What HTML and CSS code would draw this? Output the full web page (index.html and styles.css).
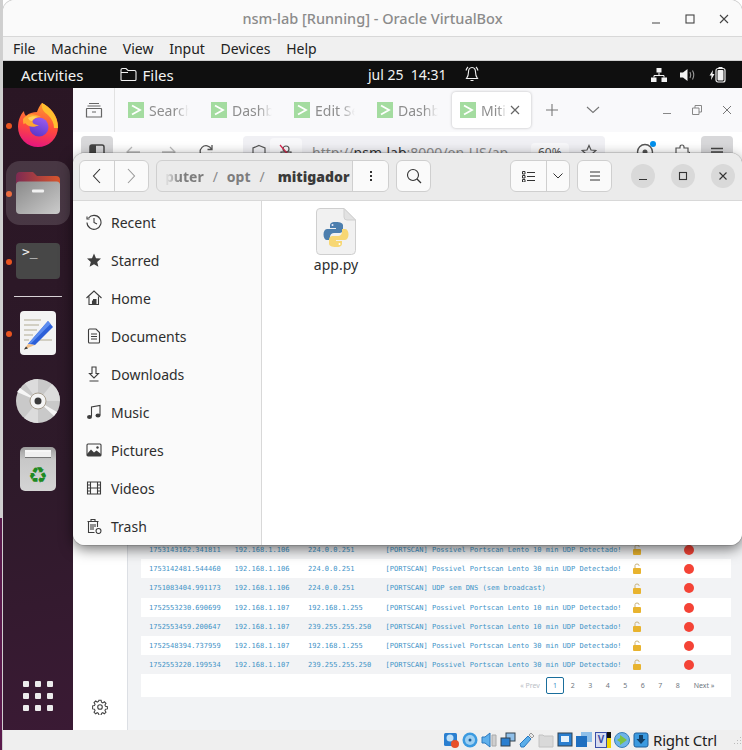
FILE: index.html
```html
<!DOCTYPE html>
<html>
<head>
	<title>nsm-lab [Running] - Oracle VirtualBox</title>
	<meta charset="utf-8" />
	<link rel="stylesheet" href="styles.css">
</head>
<body>
<div class="edge"></div>
<div class="vbox">
	<div class="titlebar">
		<span class="title">nsm-lab [Running] - Oracle VirtualBox</span>
		<div class="wm-btns">
			<svg width="12" height="12" viewBox="0 0 12 12"><path d="M2 10h8" class="ln"/></svg>
			<svg width="12" height="12" viewBox="0 0 12 12"><rect x="2" y="2" width="8" height="8" class="ln"/></svg>
			<svg width="12" height="12" viewBox="0 0 12 12"><path d="M2 2l8 8M10 2l-8 8" class="ln"/></svg>
		</div>
	</div>
	<div class="menubar">
		<span>File</span><span>Machine</span><span>View</span><span>Input</span><span>Devices</span><span>Help</span>
	</div>

	<div class="guest">
		<div class="topbar">
			<span class="activities">Activities</span>
			<span class="app-name">
				<svg width="17" height="15" viewBox="0 0 17 15"><path d="M1 13V3q0-1.500 1.500-1.500h3.500l2 2h6.500q1.500 0 1.500 1.500v7.500q0 1-1 1H2q-1 0-1-1zM1 5.500h7" fill="none" stroke="#f2f2f2" stroke-width="1.100"/></svg>
				Files
			</span>
			<span class="clock">jul 25&nbsp;&nbsp;14:31</span>
			<svg class="bell" width="14" height="16" viewBox="0 0 14 16"><path d="M7 1.500C4.500 1.500 3.500 3.500 3.500 6c0 3-.8 5-2 6.500h11c-1.200-1.500-2-3.500-2-6.500 0-2.500-1-4.500-3.500-4.500zM5.500 14.500h3M1 4.500Q1.500 2.500 3 1M13 4.500Q12.500 2.500 11 1" fill="none" stroke="#f2f2f2" stroke-width="1.100"/></svg>
			<div class="tray">
				<svg width="16" height="14" viewBox="0 0 16 14"><path d="M5.500 0h5v4.500h-5zM0 9.500h5.500V14H0zM10.500 9.500H16V14h-5.500z" fill="#f2f2f2"/><path d="M8 4.500v3M3 9.500V7.500h10v2" fill="none" stroke="#f2f2f2"/></svg>
				<svg width="16" height="14" viewBox="0 0 16 14"><path d="M0 4.500h3L7.500 1v12L3 9.500H0z" fill="#f2f2f2"/><path d="M10 4q1.500 3 0 6M12.500 2.500q2.500 4.500 0 9" fill="none" stroke="#999" stroke-width="1.100"/></svg>
				<svg width="17" height="16" viewBox="0 0 17 16"><path d="M4 3L.5 8.500h2L2 13l3.500-6h-2z" fill="#f2f2f2"/><rect x="7" y="1.500" width="9" height="13.500" rx="2" fill="none" stroke="#f2f2f2" stroke-width="1.200"/><rect x="9.500" y="0" width="4" height="2" fill="#f2f2f2"/><rect x="8.500" y="3" width="6" height="10.500" rx="1" fill="#f2f2f2"/></svg>
			</div>
		</div>

		<div class="desk">
			<div class="dock">
				<div class="dock-item has-dot">
					<svg width="42" height="44" viewBox="0 0 42 44">
						<defs>
							<linearGradient id="ff" x1="0.6" y1="0" x2="0.4" y2="1"><stop offset="0" stop-color="#ff9a2e"/><stop offset="0.55" stop-color="#ff4a3d"/><stop offset="1" stop-color="#e5147f"/></linearGradient>
							<linearGradient id="ffp" x1="0.7" y1="0" x2="0.3" y2="1"><stop offset="0" stop-color="#9a5cf0"/><stop offset="1" stop-color="#5a36c8"/></linearGradient>
						</defs>
						<path d="M1 24C1 18 3 12 7 8c0 2 1 4 2 5 3-3 7-4 11-4 2-5 3-7 5-9 8 4 16 12 16 24a20 20 0 0 1-40 0z" fill="url(#ff)"/>
						<path d="M25 0c-1 6 2 9 6 12 4 4 6 8 6 13h4C41 13 33 4 25 0z" fill="#ffbf2e"/>
						<circle cx="22" cy="24" r="9.500" fill="url(#ffp)"/>
						<path d="M6 16c4-6 11-6 18-2-4 0-7 1-8 3-2 3 2 5 6 5-5 3-11 2-14-2-1 2-2 2-2-4z" fill="#ffa733"/>
						<path d="M11 15c3-2 7-2 10-1-3 1-5 2-6 4-2 0-3-1-4-3z" fill="#ffd35c"/>
					</svg>
				</div>
				<div class="dock-item has-dot is-active">
					<svg width="44" height="42" viewBox="0 0 44 42">
						<defs>
							<linearGradient id="fold" x1="0" y1="0" x2="1" y2="0"><stop offset="0" stop-color="#7d2a52"/><stop offset="1" stop-color="#d9562c"/></linearGradient>
							<linearGradient id="front" x1="0" y1="0" x2="1" y2="1"><stop offset="0" stop-color="#8a8a8a"/><stop offset="1" stop-color="#cbcbcb"/></linearGradient>
						</defs>
						<path d="M0 5q0-5 4-5h13l4 4h19q4 0 4 4v12H0z" fill="url(#fold)"/>
						<path d="M0 13q0-3.500 3.500-3.500h37q3.500 0 3.500 3.500v25q0 4-4 4H4q-4 0-4-4z" fill="url(#front)"/>
						<rect x="16" y="17.500" width="12" height="3" rx="1" fill="#f2f2f2"/>
					</svg>
				</div>
				<div class="dock-item has-dot">
					<div class="term-icon">&gt;_</div>
				</div>
				<div class="dock-sep"></div>
				<div class="dock-item has-dot">
					<svg width="36" height="44" viewBox="0 0 36 44">
						<rect width="36" height="44" rx="4" fill="#f3f3f3"/>
						<path d="M4 9h17M4 14h15M4 19h13M4 24h9M4 29h5M18 29h14" stroke="#c8c4b4" stroke-width="1.500"/>
						<path d="M28 10l5 6-18 18-7-1z" fill="#2c5fd8"/>
						<path d="M28 10l2.500 3L11 32.500 8 33z" fill="#5c8cf0"/>
						<path d="M8 33l7 1-11 4.500z" fill="#f2c08a"/>
						<path d="M4 38.500l2-3 2 2z" fill="#333"/>
					</svg>
				</div>
				<div class="dock-item">
					<svg width="44" height="44" viewBox="0 0 44 44">
						<circle cx="22" cy="22" r="22" fill="#c9c9c9"/>
						<path d="M22 22L9 4.500A22 22 0 0 1 22 0zM22 22l22 0A22 22 0 0 0 36 5zM22 22v22a22 22 0 0 1-14-5z" fill="#dcdcdc"/>
						<path d="M22 22L1 13 4 9zM22 22l19 11-3 4z" fill="#f6f6f6"/>
						<circle cx="22" cy="22" r="8" fill="#f4f4f4" stroke="#a89f90"/>
						<circle cx="22" cy="22" r="3.500" fill="#3a3a3a"/>
					</svg>
				</div>
				<div class="dock-item">
					<div class="bin-icon">
						<div class="bin-top"></div>
						<span class="bin-mark">♻</span>
					</div>
				</div>
				<div class="app-grid">
					<i></i><i></i><i></i><i></i><i></i><i></i><i></i><i></i><i></i>
				</div>
			</div>

			<div class="browser">
				<div class="tabstrip">
					<div class="tabview">
						<svg width="18" height="18" viewBox="0 0 18 18"><path d="M4 2.500h10M2.500 5h13M2 7.500h14q.5 0 .5.500v8H1.500V8q0-.5.500-.5zM7 11h4" fill="none" stroke="#666" stroke-width="1.200"/></svg>
					</div>
					<div class="tab"><b class="fav"><svg width="16" height="16" viewBox="0 0 16 16"><path d="M4 3.500L12 8l-8 4.500" class="fav-mark"/></svg></b><span class="tab-label">Search</span></div>
					<div class="tab"><b class="fav"><svg width="16" height="16" viewBox="0 0 16 16"><path d="M4 3.500L12 8l-8 4.500" class="fav-mark"/></svg></b><span class="tab-label">Dashboard</span></div>
					<div class="tab"><b class="fav"><svg width="16" height="16" viewBox="0 0 16 16"><path d="M4 3.500L12 8l-8 4.500" class="fav-mark"/></svg></b><span class="tab-label">Edit Search</span></div>
					<div class="tab tab-wide"><b class="fav"><svg width="16" height="16" viewBox="0 0 16 16"><path d="M4 3.500L12 8l-8 4.500" class="fav-mark"/></svg></b><span class="tab-label">Dashboard</span></div>
					<div class="tab tab-current"><b class="fav"><svg width="16" height="16" viewBox="0 0 16 16"><path d="M4 3.500L12 8l-8 4.500" class="fav-mark"/></svg></b><span class="tab-label">Mitigador</span>
						<svg class="tab-x" width="10" height="10" viewBox="0 0 10 10"><path d="M1 1l8 8M9 1l-8 8" fill="none" stroke="#666" stroke-width="1.200"/></svg>
					</div>
					<svg class="new-tab" width="14" height="14" viewBox="0 0 14 14"><path d="M7 1v12M1 7h12" fill="none" stroke="#777" stroke-width="1.100"/></svg>
					<svg class="tab-list" width="14" height="8" viewBox="0 0 14 8"><path d="M1 1l6 5.500L13 1" fill="none" stroke="#777" stroke-width="1.100"/></svg>
					<div class="browser-btns">
						<svg width="10" height="10" viewBox="0 0 10 10"><path d="M1 8.500h8" fill="none" stroke="#888"/></svg>
						<svg width="10" height="10" viewBox="0 0 10 10"><path d="M.5 3h6.500v6.500H.5zM3 3V.5h6.500V7H7" fill="none" stroke="#888"/></svg>
						<svg width="10" height="10" viewBox="0 0 10 10"><path d="M1 1l8 8M9 1l-8 8" fill="none" stroke="#777"/></svg>
					</div>
				</div>
				<div class="navbar">
					<div class="nav-side"><svg width="16" height="16" viewBox="0 0 16 16"><rect x="1" y="1" width="14" height="14" rx="2" fill="none" stroke="#444" stroke-width="1.500"/><rect x="1" y="1" width="6" height="14" fill="#444"/></svg></div>
					<svg class="nav-back" width="16" height="14" viewBox="0 0 16 14"><path d="M15 7H2M7 2L2 7l5 5" fill="none" stroke="#bbb" stroke-width="1.300"/></svg>
					<svg class="nav-fwd" width="16" height="14" viewBox="0 0 16 14"><path d="M1 7h13M9 2l5 5-5 5" fill="none" stroke="#bbb" stroke-width="1.300"/></svg>
					<svg class="nav-reload" width="16" height="16" viewBox="0 0 16 16"><path d="M13.500 5A6 6 0 1 0 14 9M14 1v4.500H9.500" fill="none" stroke="#555" stroke-width="1.300"/></svg>
					<div class="urlbar">
						<svg class="url-shield" width="16" height="16" viewBox="0 0 16 16"><path d="M8 1.500l6 2.500v5l-3 5H5l-3-5V4z" fill="none" stroke="#555" stroke-width="1.200"/></svg>
						<span class="url-lock"><svg width="16" height="16" viewBox="0 0 16 16"><circle cx="8" cy="5" r="3" fill="none" stroke="#555" stroke-width="1.200"/><rect x="3" y="8" width="10" height="7" fill="none" stroke="#555" stroke-width="1.200"/><path d="M2 1l12 14" stroke="#d7264d" stroke-width="1.200"/></svg></span>
						<span class="url-text">http://<b>nsm-lab</b>:8000/en-US/ap</span>
						<span class="url-zoom">60%</span>
						<svg class="url-star" width="16" height="16" viewBox="0 0 16 16"><path d="M8 1.500l2 4.500 4.800.5-3.600 3.200 1 4.800L8 12l-4.200 2.500 1-4.800L1.200 6.500 6 6z" fill="none" stroke="#555" stroke-width="1.200"/></svg>
					</div>
					<div class="nav-tools">
						<span class="tool-pocket"><svg width="18" height="18" viewBox="0 0 18 18"><circle cx="9" cy="9" r="7.500" fill="none" stroke="#555" stroke-width="1.400"/><circle cx="9" cy="9" r="2.500" fill="#555"/></svg><i class="tool-dot"></i></span>
						<svg width="16" height="16" viewBox="0 0 16 16"><path d="M6 3q0-2 2-2t2 2v1h4v4q2 0 2 2t-2 2v3H2V4h4z" fill="none" stroke="#555" stroke-width="1.200"/></svg>
						<span class="tool-menu"><svg width="14" height="10" viewBox="0 0 14 10"><path d="M1 1.500h12M1 5h12" fill="none" stroke="#444" stroke-width="1.300"/></svg></span>
					</div>
				</div>

				<div class="app">
					<div class="app-side">
						<svg width="16" height="16" viewBox="0 0 16 16"><circle cx="8" cy="8" r="2.300" fill="none" stroke="#444" stroke-width="1.100"/><path d="M6.800 1h2.400l.4 2 1.300.6 1.700-1.100 1.700 1.700-1.100 1.700.6 1.300 2 .4v2.400l-2 .4-.6 1.300 1.100 1.700-1.700 1.700-1.700-1.100-1.300.6-.4 2H6.800l-.4-2-1.300-.6-1.700 1.100-1.700-1.700 1.100-1.700-.6-1.300-2-.4V6.800l2-.4.6-1.300-1.100-1.700 1.700-1.700 1.700 1.100 1.300-.6z" transform="translate(.4 .4) scale(.95)" fill="none" stroke="#444" stroke-width="1.100"/></svg>
					</div>
					<div class="app-main">
						<div class="row"><span>1753143162.341811</span><span>192.168.1.106</span><span>224.0.0.251</span><span>[PORTSCAN] Possivel Portscan Lento 10 min UDP Detectado!</span><svg class="lock" width="8" height="11" viewBox="0 0 8 11"><path d="M2 5V2.500Q2 1 4 1t2 1.500V3" fill="none" stroke="#c9b27a"/><rect y="5" width="8" height="6" rx="1" fill="#e8b32e"/></svg><i class="status"></i></div>
						<div class="row row-odd"><span>1753142481.544460</span><span>192.168.1.106</span><span>224.0.0.251</span><span>[PORTSCAN] Possivel Portscan Lento 30 min UDP Detectado!</span><svg class="lock" width="8" height="11" viewBox="0 0 8 11"><path d="M2 5V2.500Q2 1 4 1t2 1.500V3" fill="none" stroke="#c9b27a"/><rect y="5" width="8" height="6" rx="1" fill="#e8b32e"/></svg><i class="status"></i></div>
						<div class="row row-tall"><span>1751083404.991173</span><span>192.168.1.106</span><span>224.0.0.251</span><span>[PORTSCAN] UDP sem DNS (sem broadcast)</span><svg class="lock" width="8" height="11" viewBox="0 0 8 11"><path d="M2 5V2.500Q2 1 4 1t2 1.500V3" fill="none" stroke="#c9b27a"/><rect y="5" width="8" height="6" rx="1" fill="#e8b32e"/></svg><i class="status"></i></div>
						<div class="row row-odd"><span>1752553230.690699</span><span>192.168.1.107</span><span>192.168.1.255</span><span>[PORTSCAN] Possivel Portscan Lento 10 min UDP Detectado!</span><svg class="lock" width="8" height="11" viewBox="0 0 8 11"><path d="M2 5V2.500Q2 1 4 1t2 1.500V3" fill="none" stroke="#c9b27a"/><rect y="5" width="8" height="6" rx="1" fill="#e8b32e"/></svg><i class="status"></i></div>
						<div class="row"><span>1752553459.200647</span><span>192.168.1.107</span><span>239.255.255.250</span><span>[PORTSCAN] Possivel Portscan Lento 10 min UDP Detectado!</span><svg class="lock" width="8" height="11" viewBox="0 0 8 11"><path d="M2 5V2.500Q2 1 4 1t2 1.500V3" fill="none" stroke="#c9b27a"/><rect y="5" width="8" height="6" rx="1" fill="#e8b32e"/></svg><i class="status"></i></div>
						<div class="row row-odd"><span>1752548394.737959</span><span>192.168.1.107</span><span>192.168.1.255</span><span>[PORTSCAN] Possivel Portscan Lento 30 min UDP Detectado!</span><svg class="lock" width="8" height="11" viewBox="0 0 8 11"><path d="M2 5V2.500Q2 1 4 1t2 1.500V3" fill="none" stroke="#c9b27a"/><rect y="5" width="8" height="6" rx="1" fill="#e8b32e"/></svg><i class="status"></i></div>
						<div class="row"><span>1752553220.199534</span><span>192.168.1.107</span><span>239.255.255.250</span><span>[PORTSCAN] Possivel Portscan Lento 30 min UDP Detectado!</span><svg class="lock" width="8" height="11" viewBox="0 0 8 11"><path d="M2 5V2.500Q2 1 4 1t2 1.500V3" fill="none" stroke="#c9b27a"/><rect y="5" width="8" height="6" rx="1" fill="#e8b32e"/></svg><i class="status"></i></div>
						<div class="pager">
							<span class="pg-off">« Prev</span>
							<span class="pg-cur">1</span>
							<span>2</span><span>3</span><span>4</span><span>5</span><span>6</span><span>7</span><span>8</span>
							<span class="pg-next">Next »</span>
						</div>
					</div>
				</div>
			</div>

			<!-- nautilus window floats over the browser -->
			<div class="files">
				<div class="files-head">
					<div class="btn-group nav-group">
						<span><svg width="9" height="16" viewBox="0 0 9 16"><path d="M8 1L1.500 8 8 15" fill="none" stroke="#333" stroke-width="1.100"/></svg></span>
						<span><svg width="9" height="16" viewBox="0 0 9 16"><path d="M1 1l6.500 7L1 15" fill="none" stroke="#999" stroke-width="1.100"/></svg></span>
					</div>
					<div class="pathbar">
						<div class="path-crumbs"><span class="crumb-faded">puter</span><em>/</em><span class="crumb">opt</span><em>/</em><strong>mitigador</strong></div>
						<span class="path-menu"><i></i><i></i><i></i></span>
					</div>
					<span class="btn-one search-btn"><svg width="16" height="16" viewBox="0 0 16 16"><circle cx="7" cy="7" r="5.500" fill="none" stroke="#333" stroke-width="1.100"/><path d="M11 11l4 4" stroke="#333" stroke-width="1.300"/></svg></span>
					<div class="btn-group view-group">
						<span class="view-list"><svg width="13" height="11" viewBox="0 0 13 11"><path d="M.5.500h2.500V3H.5zM.5 4.500h2.500V7H.5zM.5 8.500h2.500V11H.5zM5 1.500h8M5 5.500h8M5 9.500h8" fill="none" stroke="#333"/></svg></span>
						<span class="view-more"><svg width="10" height="6" viewBox="0 0 10 6"><path d="M.5.500L5 5 9.500.500" fill="none" stroke="#333"/></svg></span>
					</div>
					<span class="btn-one burger-btn"><svg width="12" height="10" viewBox="0 0 12 10"><path d="M1 1h10M1 5h10M1 9h10" fill="none" stroke="#333"/></svg></span>
					<div class="circle-btns">
						<span><svg width="10" height="10" viewBox="0 0 10 10"><path d="M1 8.500h8" stroke="#333" stroke-width="1.100"/></svg></span>
						<span><svg width="10" height="10" viewBox="0 0 10 10"><rect x="1.500" y="1.500" width="7" height="7" fill="none" stroke="#333" stroke-width="1.100"/></svg></span>
						<span><svg width="10" height="10" viewBox="0 0 10 10"><path d="M1.500 1.500l7 7M8.500 1.500l-7 7" stroke="#333" stroke-width="1.100"/></svg></span>
					</div>
				</div>
				<div class="files-body">
					<div class="places">
						<div class="place"><svg width="16" height="16" viewBox="0 0 16 16"><path d="M2.500 4A7 7 0 1 1 1 8.500M1 2.500v2.500h2.500M8 4v4.500l3 1.500" class="ic"/></svg>Recent</div>
						<div class="place"><svg width="16" height="16" viewBox="0 0 16 16"><path d="M8 1.500l2 4.700 5 .4-3.800 3.300 1.200 4.900L8 12.200l-4.400 2.600 1.200-4.900L1 6.600l5-.4z" fill="#3d3d3d"/></svg>Starred</div>
						<div class="place"><svg width="16" height="16" viewBox="0 0 16 16"><path d="M.5 8L8 1l7.500 7M3 6.500v8h3.500v-4h0M12.500 6.500v8H9.500" class="ic"/><rect x="7" y="9" width="3.500" height="6" fill="#3d3d3d"/></svg>Home</div>
						<div class="place"><svg width="16" height="16" viewBox="0 0 16 16"><path d="M2.500 2q0-1 1-1H10l3.500 3.500V14q0 1-1 1h-9q-1 0-1-1zM5 6h6M5 8.500h6M5 11h6" class="ic"/></svg>Documents</div>
						<div class="place"><svg width="16" height="16" viewBox="0 0 16 16"><path d="M6 1h4v6.500h2.500L8 12 3.500 7.500H6zM3.500 15h9" class="ic"/></svg>Downloads</div>
						<div class="place"><svg width="16" height="16" viewBox="0 0 16 16"><path d="M5.500 12.500V3L14 1.500V11" class="ic"/><ellipse cx="3.500" cy="13" rx="2.500" ry="2" fill="#3d3d3d"/><ellipse cx="12" cy="11.500" rx="2.500" ry="2" fill="#3d3d3d"/></svg>Music</div>
						<div class="place"><svg width="16" height="16" viewBox="0 0 16 16"><rect x="1" y="2" width="14" height="12" rx="1" class="ic"/><path d="M1 14v-2l4-4.500 3 3 2.500-2L15 12v2z" fill="#3d3d3d"/><circle cx="11.500" cy="5.500" r="1.200" fill="#3d3d3d"/></svg>Pictures</div>
						<div class="place"><svg width="16" height="16" viewBox="0 0 16 16"><path d="M1.500 2h13v12h-13zM4.500 2v12M11.500 2v12M1.500 5h3M1.500 8h3M1.500 11h3M11.500 5h3M11.500 8h3M11.500 11h3M4.500 8h7" class="ic"/></svg>Videos</div>
						<div class="place"><svg width="16" height="16" viewBox="0 0 16 16"><path d="M1.500 3.500h11M5 3.500V1.500h4v2M2.500 3.500v11h6M11.500 3.500V9M5 6v6M7 6v6M9 6v3" class="ic"/><circle cx="12.500" cy="13" r="2.500" class="ic"/></svg>Trash</div>
					</div>
					<div class="folder-view">
						<div class="file-item">
							<svg width="40" height="47" viewBox="0 0 40 47">
								<path d="M4 .500h24L39.500 12v30.500q0 4-4 4H4q-3.500 0-3.500-4V4Q.5.500 4 .500z" fill="#f1f1f1" stroke="#cfcfcf"/>
								<path d="M28 .500V9q0 3 3 3h8.500z" fill="#e2e2e2" stroke="#cfcfcf"/>
								<path d="M19.500 14c-5 0-5.500 2-5.500 3.500V20h6v1h-8.500c-2.500 0-4 2-4 5.500s1.500 5.500 3.500 5.500H14v-3c0-2.500 2-4 4-4h5.500c2 0 3.500-1.500 3.500-3.500v-4c0-2-2-3.500-7.500-3.500z" fill="#4d7fae"/>
								<circle cx="16.500" cy="17" r="1" fill="#eef"/>
								<path d="M20.500 39c5 0 5.500-2 5.500-3.500V33h-6v-1h8.500c2.500 0 4-2 4-5.500S31 21 29 21H26v3c0 2.500-2 4-4 4h-5.500c-2 0-3.500 1.500-3.500 3.500v4c0 2 2 3.500 7.500 3.500z" fill="#f7d774"/>
								<circle cx="23.500" cy="36" r="1" fill="#fff"/>
							</svg>
							<span>app.py</span>
						</div>
					</div>
				</div>
			</div>
		</div>
	</div>

	<div class="statusbar">
		<svg width="16" height="16" viewBox="0 0 16 16"><rect x="1" y="1" width="13" height="13" rx="1.500" fill="#2a7fd0"/><circle cx="7" cy="6" r="3.500" fill="#bfe0f7"/><circle cx="12" cy="12" r="4" fill="#e8502a"/></svg>
		<svg width="16" height="16" viewBox="0 0 16 16"><circle cx="8" cy="8" r="7.500" fill="#3b9ae0"/><circle cx="8" cy="8" r="5" fill="#9ed0f2"/><circle cx="8" cy="8" r="1.500" fill="#1d5f9c"/></svg>
		<svg width="16" height="16" viewBox="0 0 16 16"><path d="M1 5h3l5-4v14l-5-4H1z" fill="#5fb0ec" stroke="#2a78be"/><path d="M11 3h4v11h-4z" fill="#cfcfcf" stroke="#aaa"/></svg>
		<svg width="16" height="16" viewBox="0 0 16 16"><rect x="6" y="1" width="9" height="8" fill="#8fbfe8" stroke="#33424f"/><rect x="1" y="6" width="9" height="8" fill="#2a7fd0" stroke="#33424f"/></svg>
		<svg width="16" height="16" viewBox="0 0 16 16"><path d="M1 12l8-8 3 3-7 8H2z" fill="#5aaeea" stroke="#2a78be"/><path d="M10 3l2-2 3 3-2 2z" fill="#e8e8e8" stroke="#999"/></svg>
		<svg width="16" height="16" viewBox="0 0 16 16"><path d="M1 3h4l1 1h9v11H1z" fill="#d9d9d9" stroke="#c2c2c2"/></svg>
		<svg width="16" height="16" viewBox="0 0 16 16"><rect x="1" y="1" width="14" height="13" fill="#2a7fd0" stroke="#33424f"/><rect x="4" y="4" width="8" height="6" fill="#e6f2fb"/></svg>
		<svg width="16" height="16" viewBox="0 0 16 16"><rect x="5" y="0" width="11" height="10" fill="#8fbfe8"/><rect x="0" y="4" width="11" height="11" fill="#1f6fc0"/></svg>
		<span class="st-v"><b>V</b><i></i></span>
		<svg width="16" height="16" viewBox="0 0 16 16"><circle cx="8" cy="8" r="7.500" fill="#6eb4e8" stroke="#3a7fb8"/><path d="M6 3l7 5-7 5V10L3 8l3-2z" fill="#7cc242"/></svg>
		<svg width="16" height="16" viewBox="0 0 16 16"><rect x="1" y="1" width="14" height="14" rx="2" fill="#3b9ae0" stroke="#1f5f9a"/><path d="M6 3h4v4h2.500L8 12 3.500 7H6z" fill="#123f66"/></svg>
		<span class="host-key">Right Ctrl</span>
		<svg class="grip" width="9" height="9" viewBox="0 0 9 9"><path d="M7 1h1v1H7zM4 4h1v1H4zM7 4h1v1H7zM1 7h1v1H1zM4 7h1v1H4zM7 7h1v1H7z" fill="#bbb"/></svg>
	</div>
</div>
</body>
</html>
```

FILE: styles.css
```css
html, body {
    margin: 0;
    height: 750px;
    overflow: hidden;
}
body {
    display: flex;
    width: 742px;
    background: #fff;
    font-family: "Noto Sans", sans-serif;
    font-size: 14px;
    color: #2e2e2e;
}
svg {
    display: block;
    flex: none;
}
.ln {
    fill: none;
    stroke: #444;
    stroke-width: 1.1;
}
.edge {
    width: 3px;
    flex: none;
    background: linear-gradient(#cfcfcf 518px, #5a1a4c 518px);
}
.vbox {
    flex: 1;
    min-width: 0;
    display: flex;
    flex-direction: column;
    border-radius: 12px 12px 0 0;
    overflow: hidden;
    box-shadow: 0 0 0 1px #d0d0d0;
}

/* vbox title and menu */
.titlebar {
    height: 37px;
    flex: none;
    box-sizing: border-box;
    display: flex;
    align-items: center;
    justify-content: center;
    position: relative;
    background: #fafafa;
    border-bottom: 1px solid #d8d8d8;
}
.title {
    font-weight: 500;
    font-size: 14.500px;
    color: #8b8b8b;
}
.wm-btns {
    position: absolute;
    right: 12px;
    top: 13px;
    display: flex;
    gap: 22px;
}
.menubar {
    height: 24px;
    flex: none;
    box-sizing: border-box;
    padding: 0 0 0 10px;
    display: flex;
    align-items: center;
    gap: 15.700px;
    background: #f0f0f0;
    border-bottom: 1px solid #d0d0d0;
    color: #222;
}

/* guest */
.guest {
    flex: 1;
    min-height: 0;
    display: flex;
    flex-direction: column;
}
.topbar {
    height: 27px;
    flex: none;
    display: flex;
    align-items: center;
    position: relative;
    background: #0f0f0f;
    color: #f2f2f2;
    font-size: 15px;
}
.activities {
    margin-left: 18px;
}
.app-name {
    display: flex;
    align-items: center;
    gap: 6px;
    margin-left: 36px;
}
.clock {
    position: absolute;
    left: 365px;
    font-size: 14px;
}
.bell {
    position: absolute;
    left: 462px;
    top: 5px;
}
.tray {
    margin-left: auto;
    margin-right: 16px;
    display: flex;
    align-items: center;
    gap: 13px;
}
.desk {
    flex: 1;
    min-height: 0;
    display: flex;
    position: relative;
}

/* dock */
.dock {
    width: 70px;
    flex: none;
    box-sizing: border-box;
    padding: 3px 0 19px;
    display: flex;
    flex-direction: column;
    background: linear-gradient(170deg, #2a1624 0%, #2e1a2a 60%, #3a1a34 100%);
}
.dock-item {
    height: 68px;
    flex: none;
    display: flex;
    align-items: center;
    justify-content: center;
    position: relative;
}
.has-dot::before {
    content: "";
    position: absolute;
    left: 3px;
    top: 32px;
    width: 6px;
    height: 6px;
    border-radius: 50%;
    background: #e95420;
}
.is-active::after {
    content: "";
    position: absolute;
    left: 3px;
    right: 3px;
    top: 2px;
    bottom: 2px;
    border-radius: 14px;
    background: rgba(255, 255, 255, 0.14);
}
.is-active svg {
    position: relative;
    z-index: 1;
}
.term-icon {
    width: 44px;
    height: 36px;
    box-sizing: border-box;
    padding: 0 0 0 6px;
    border-radius: 4px;
    background: #474747;
    color: #f0f0f0;
    font-family: "DejaVu Sans Mono", monospace;
    font-size: 13px;
    line-height: 18px;
}
.dock-sep {
    height: 1px;
    flex: none;
    margin: 1px 11px 2px;
    background: #d8d2d6;
}
.bin-icon {
    width: 36px;
    height: 44px;
    border-radius: 5px;
    background: linear-gradient(#9c9c9c, #c8c8c8 30%, #d4d4d4);
    display: flex;
    flex-direction: column;
    align-items: center;
    overflow: hidden;
}
.bin-top {
    width: 26px;
    height: 5px;
    flex: none;
    margin-top: 3px;
    border-top: 2px solid #f6f6f6;
    background: #f0f0f0;
    box-shadow: 0 1px 0 #777;
}
.bin-mark {
    margin-top: 4px;
    color: #1f8a22;
    font-family: "DejaVu Sans", sans-serif;
    font-size: 22px;
    line-height: 30px;
}
.app-grid {
    margin: auto auto 0;
    display: grid;
    grid-template-columns: repeat(3, 6px);
    gap: 6px;
}
.app-grid i {
    height: 6px;
    border-radius: 1px;
    background: #ececec;
}

/* firefox */
.browser {
    flex: 1;
    min-width: 0;
    display: flex;
    flex-direction: column;
    background: #fff;
}
.tabstrip {
    height: 44px;
    flex: none;
    display: flex;
    align-items: center;
    position: relative;
    background: #f9f9fb;
}
.tabview {
    width: 42px;
    height: 44px;
    flex: none;
    box-sizing: border-box;
    display: flex;
    align-items: center;
    justify-content: center;
    border-right: 1px solid #e2e2e2;
}
.tab {
    width: 83px;
    height: 36px;
    flex: none;
    box-sizing: border-box;
    display: flex;
    align-items: center;
    gap: 5px;
    padding-left: 13px;
    color: #8e8e8e;
}
.tab-wide {
    width: 88px;
}
.tab-current {
    width: 79px;
    padding-left: 8px;
    position: relative;
    background: #fff;
    border-radius: 4px;
    box-shadow: 0 0 3px rgba(0, 0, 0, 0.25);
}
.fav {
    width: 16px;
    height: 16px;
    flex: none;
    background: #a4dca0;
}
.fav-mark {
    fill: none;
    stroke: #fff;
    stroke-width: 1.800;
}
.tab-label {
    width: 40px;
    overflow: hidden;
    white-space: nowrap;
    -webkit-mask-image: linear-gradient(90deg, #000 65%, transparent);
    mask-image: linear-gradient(90deg, #000 65%, transparent);
}
.tab-current .tab-label {
    width: 26px;
}
.tab-x {
    position: absolute;
    left: 58px;
    top: 13px;
}
.new-tab {
    margin-left: 14px;
}
.tab-list {
    margin-left: 27px;
}
.browser-btns {
    position: absolute;
    right: 10px;
    top: 17px;
    display: flex;
    gap: 20px;
}
.navbar {
    height: 40px;
    flex: none;
    display: flex;
    align-items: flex-start;
    padding-top: 4px;
    box-sizing: border-box;
    background: #fff;
}
.nav-side {
    width: 32px;
    height: 32px;
    flex: none;
    margin-left: 8px;
    display: flex;
    align-items: center;
    justify-content: center;
    background: #d8d8da;
    border-radius: 4px;
}
.nav-back {
    margin: 9px 0 0 12px;
}
.nav-fwd {
    margin: 9px 0 0 20px;
}
.nav-reload {
    margin: 8px 0 0 21px;
}
.urlbar {
    width: 362px;
    height: 32px;
    flex: none;
    margin-left: 29px;
    display: flex;
    align-items: center;
    box-sizing: border-box;
    padding-left: 8px;
    background: #f0f0f4;
    border-radius: 4px;
    color: #8a8a8a;
    font-size: 14px;
}
.url-lock {
    width: 32px;
    height: 28px;
    flex: none;
    margin-left: 3px;
    display: flex;
    align-items: center;
    justify-content: center;
    background: #f8f8fa;
    border-radius: 4px;
}
.url-text {
    width: 216px;
    flex: none;
    margin-left: 10px;
    overflow: hidden;
    white-space: nowrap;
}
.url-text b {
    color: #333;
    font-weight: 400;
}
.url-zoom {
    margin-left: 3px;
    padding: 1px 7px;
    background: #f8f8fa;
    border-radius: 4px;
    font-size: 12px;
    color: #555;
}
.url-star {
    margin-left: 12px;
}
.nav-tools {
    flex: 1;
    display: flex;
    align-items: center;
    height: 32px;
    padding-left: 31px;
    gap: 20px;
}
.tool-pocket {
    position: relative;
}
.tool-dot {
    position: absolute;
    right: -2px;
    top: -2px;
    width: 6px;
    height: 6px;
    border-radius: 50%;
    background: #0090ed;
}
.tool-menu {
    width: 32px;
    height: 32px;
    margin-left: -9px;
    display: flex;
    align-items: center;
    justify-content: center;
    background: #d8d8da;
    border-radius: 4px;
}

/* web app behind the file manager */
.app {
    flex: 1;
    min-height: 0;
    display: flex;
}
.app-side {
    width: 55px;
    flex: none;
    box-sizing: border-box;
    display: flex;
    flex-direction: column;
    justify-content: flex-end;
    align-items: center;
    padding-bottom: 15px;
    background: #fff;
    border-right: 1px solid #dcdfe4;
}
.app-main {
    flex: 1;
    min-width: 0;
    box-sizing: border-box;
    padding: 0 11px 33px 13px;
    display: flex;
    flex-direction: column;
    justify-content: flex-end;
    background: #f2f3f5;
}
.row {
    height: 19px;
    flex: none;
    display: grid;
    grid-template-columns: 85.600px 73.400px 77.600px 247.400px 51px 10px;
    align-items: center;
    padding-left: 8px;
    font-family: "DejaVu Sans Mono", monospace;
    font-size: 7px;
    color: #3f93c7;
    white-space: nowrap;
}
.row-tall {
    height: 20px;
}
.row-odd {
    background: #fff;
}
.status {
    width: 10px;
    height: 10px;
    border-radius: 50%;
    background: #f44336;
}
.pager {
    height: 23px;
    flex: none;
    box-sizing: border-box;
    display: flex;
    align-items: center;
    justify-content: flex-end;
    padding-right: 15px;
    background: #fff;
    font-size: 7px;
    color: #6f7780;
}
.pager span {
    width: 17.500px;
    text-align: center;
}
.pager .pg-off {
    width: 24px;
    margin-right: 4px;
    color: #b9bec5;
}
.pager .pg-cur {
    width: 16px;
    height: 15px;
    line-height: 15px;
    border: 1px solid #1a6e9c;
    border-radius: 2px;
    color: #3f93c7;
}
.pager .pg-next {
    width: 24px;
    margin-left: 5.500px;
}

/* nautilus */
.files {
    position: absolute;
    left: 70px;
    right: 0;
    top: 65px;
    height: 392px;
    display: flex;
    flex-direction: column;
    overflow: hidden;
    border-radius: 12px;
    background: #fafafa;
    box-shadow: 0 4px 14px rgba(0, 0, 0, 0.55), 0 0 0 1px rgba(0, 0, 0, 0.12);
}
.files-head {
    height: 48px;
    flex: none;
    box-sizing: border-box;
    padding: 7px 0 8px 6px;
    display: flex;
    align-items: stretch;
    background: #ebebeb;
    border-bottom: 1px solid #d8d8d8;
}
.btn-group, .btn-one, .pathbar {
    box-sizing: border-box;
    display: flex;
    background: #fafafa;
    border: 1px solid #cfcfcf;
    border-radius: 6px;
    flex: none;
}
.btn-group > span, .btn-one {
    align-items: center;
    justify-content: center;
}
.btn-group > span {
    display: flex;
}
.nav-group {
    width: 70px;
}
.nav-group span {
    flex: 1;
}
.nav-group span + span {
    border-left: 1px solid #cfcfcf;
}
.pathbar {
    width: 233px;
    margin-left: 7px;
    background: #ebebeb;
    overflow: hidden;
}
.path-crumbs {
    flex: 1;
    min-width: 0;
    display: flex;
    align-items: center;
    gap: 9px;
    padding-left: 8px;
    font-weight: 700;
    color: #7d7d7d;
}
.crumb-faded {
    -webkit-mask-image: linear-gradient(90deg, transparent, #000 40%);
    mask-image: linear-gradient(90deg, transparent, #000 40%);
}
.path-crumbs em {
    font-style: normal;
    font-weight: 400;
    color: #8a8a8a;
}
.path-crumbs strong {
    margin-left: 4px;
    color: #3a3a3a;
}
.path-menu {
    width: 35px;
    flex: none;
    display: flex;
    flex-direction: column;
    align-items: center;
    justify-content: center;
    gap: 2px;
    background: #fafafa;
    border-left: 1px solid #cfcfcf;
}
.path-menu i {
    width: 2px;
    height: 2px;
    background: #333;
}
.search-btn {
    width: 35px;
    margin-left: 7px;
}
.view-group {
    width: 60px;
    margin-left: 79px;
}
.view-list {
    width: 35px;
    border-right: 1px solid #cfcfcf;
}
.view-more {
    flex: 1;
}
.burger-btn {
    width: 35px;
    margin-left: 7px;
}
.circle-btns {
    margin-left: 19px;
    display: flex;
    align-items: center;
    gap: 16px;
}
.circle-btns span {
    width: 24px;
    height: 24px;
    display: flex;
    align-items: center;
    justify-content: center;
    border-radius: 50%;
    background: #d9d9d9;
}
.files-body {
    flex: 1;
    min-height: 0;
    display: flex;
}
.places {
    width: 189px;
    flex: none;
    box-sizing: border-box;
    padding-top: 2px;
    background: #fafafa;
    border-right: 1px solid #d8d8d8;
}
.place {
    height: 38px;
    display: flex;
    align-items: center;
    gap: 9px;
    padding-left: 13px;
    color: #2e2e2e;
}
.ic {
    fill: none;
    stroke: #3d3d3d;
    stroke-width: 1.100;
}
.folder-view {
    flex: 1;
    background: #fff;
    padding: 7px 0 0 40px;
}
.file-item {
    width: 68px;
    display: flex;
    flex-direction: column;
    align-items: center;
    color: #2e2e2e;
    line-height: 20px;
}

/* vbox status bar */
.statusbar {
    height: 20px;
    flex: none;
    box-sizing: border-box;
    display: flex;
    align-items: center;
    justify-content: flex-end;
    gap: 3px;
    background: #efefef;
    color: #222;
}
.st-v {
    width: 16px;
    height: 16px;
    flex: none;
    display: flex;
}
.st-v b {
    width: 12px;
    background: #d6dcf0;
    border: 1px solid #3a4fa8;
    box-sizing: border-box;
    color: #3a4fa8;
    font-size: 10px;
    line-height: 13px;
    text-align: center;
}
.st-v i {
    width: 4px;
    background: linear-gradient(#111 40%, #f2d600 40%);
}
.host-key {
    margin: 0 13px 0 1px;
    font-size: 15px;
    letter-spacing: -0.2px;
}
```
